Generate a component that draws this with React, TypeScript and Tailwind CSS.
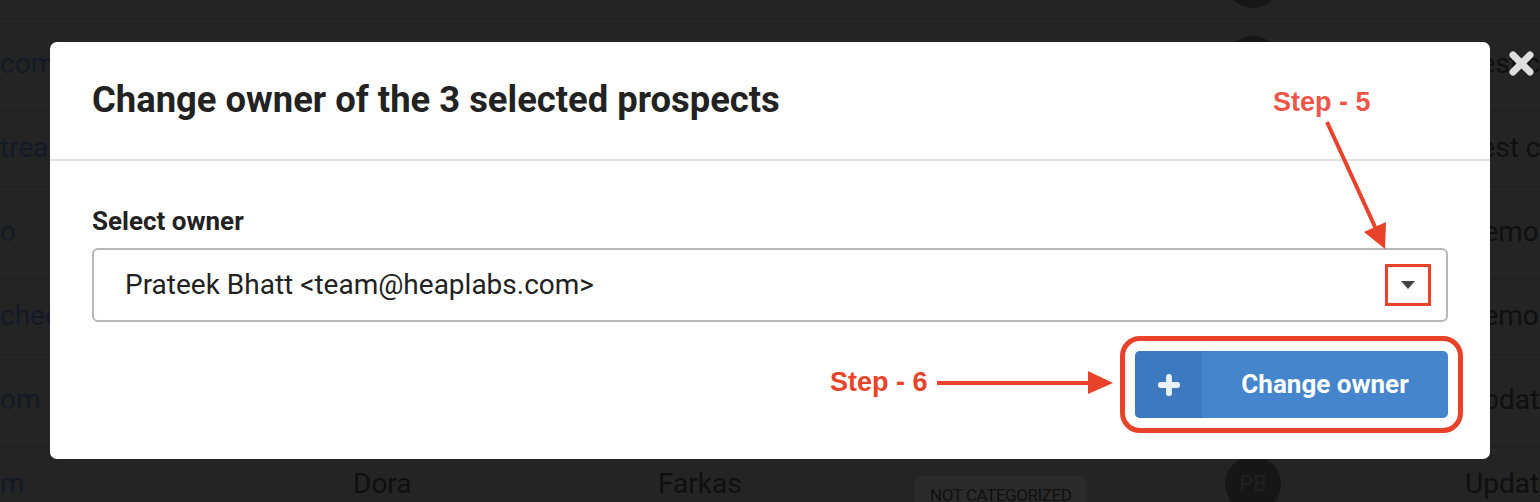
import { Plus } from "lucide-react";

const rows = [
  { left: "", right: "" },
  { left: "com", right: "Test campaign" },
  { left: "trea", right: "Test campaign" },
  { left: "o", right: "Demo" },
  { left: "chec", right: "Demo" },
  { left: "om", right: "Updated" },
  { left: "m", first: "Dora", last: "Farkas", badge: "NOT CATEGORIZED", right: "Updated" },
];

function BackgroundTable() {
  return (
    <div className="flex flex-col -mt-[62px]">
      {rows.map((r, i) => (
        <div key={i} className="flex items-center h-[84px] shrink-0 border-b border-[#2b2b2b] text-[28px] text-[#0f0f0f] whitespace-nowrap">
          <div className="w-[353px] shrink-0 text-[#131a26]">{r.left}</div>
          <div className="w-[305px] shrink-0">{r.first}</div>
          <div className="w-[257px] shrink-0">{r.last}</div>
          <div className="w-[310px] shrink-0">
            {r.badge && (
              <span className="inline-flex items-center h-[40px] px-[15px] rounded-[6px] bg-[#2a2a2a] text-[17px] tracking-tight text-[#101010] mt-[24px]">
                {r.badge}
              </span>
            )}
          </div>
          <div className="w-[240px] shrink-0">
            <div className="w-[56px] h-[56px] rounded-full bg-[#161616] flex items-center justify-center text-[22px] text-[#202020]">
              PB
            </div>
          </div>
          <div className="flex-1">{r.right}</div>
        </div>
      ))}
    </div>
  );
}

export default function App() {
  return (
    <div className="relative w-[1540px] h-[502px] overflow-hidden bg-[#242424] font-['Roboto',sans-serif]">
      <BackgroundTable />

      {/* CLOSE */}
      <svg className="absolute left-[1508px] top-[50px]" width="27" height="27" viewBox="0 0 27 27">
        <path d="M5 5 L22 22 M22 5 L5 22" stroke="#dedede" strokeWidth="7" strokeLinecap="round" />
      </svg>

      {/* MODAL */}
      <div className="absolute left-[50px] top-[42px] w-[1440px] h-[417px] bg-white rounded-[7px] flex flex-col">
        <div className="h-[119px] shrink-0 border-b-2 border-[#e2e2e2] px-[42px] flex items-center">
          <h2 className="text-[36.4px] leading-none font-bold text-[#222]">
            Change owner of the 3 selected prospects
          </h2>
        </div>

        <div className="px-[42px] pt-[47px] flex flex-col">
          <label className="text-[26px] leading-none font-bold text-[#222]">Select owner</label>
          <div className="relative mt-[14px] h-[74px] border-2 border-[#b7b7b7] rounded-[6px] flex items-center pl-[31px] pr-[20px]">
            <span className="flex-1 text-[28px] text-[#222]">Prateek Bhatt &lt;team@heaplabs.com&gt;</span>
            <div className="relative w-[46px] h-[42px] flex items-center justify-center mr-[-5px]">
              <svg width="14" height="8" viewBox="0 0 14 8">
                <path d="M0 0 H14 L7 8 Z" fill="#444" />
              </svg>
              <div className="absolute inset-0 border-[3px] border-[#e8432a]" />
            </div>
          </div>

          <div className="flex justify-end mt-[29px]">
            <div className="relative">
              <button className="flex w-[313px] h-[67px] rounded-[5px] overflow-hidden bg-[#4585cc] text-white">
                <span className="w-[67px] h-full bg-[#3d79bf] flex items-center justify-center">
                  <Plus size={28} strokeWidth={5} color="#e9f1f9" />
                </span>
                <span className="flex-1 flex items-center justify-center text-[26px] font-bold">
                  Change owner
                </span>
              </button>
              <div className="absolute -inset-[15px] border-[5px] border-[#e8432a] rounded-[20px] pointer-events-none" />
            </div>
          </div>
        </div>
      </div>

      {/* ANNOTATIONS */}
      <svg className="absolute inset-0 pointer-events-none" width="1540" height="502">
        <line x1="937" y1="383" x2="1092" y2="383" stroke="#e8432a" strokeWidth="4" />
        <polygon points="1088,371 1113,383 1088,394" fill="#e8432a" />
        <line x1="1327" y1="122" x2="1376" y2="229" stroke="#e8432a" strokeWidth="4" />
        <polygon points="1385,249 1364,232 1386,222" fill="#e8432a" />
      </svg>
      <div className="absolute left-[830px] top-[369px] text-[27px] leading-none font-bold text-[#e8442b] font-['Liberation_Sans',Arial,sans-serif]">
        Step - 6
      </div>
      <div className="absolute left-[1273px] top-[89px] text-[27px] leading-none font-bold text-[#ee5649] font-['Liberation_Sans',Arial,sans-serif]">
        Step - 5
      </div>
    </div>
  );
}
